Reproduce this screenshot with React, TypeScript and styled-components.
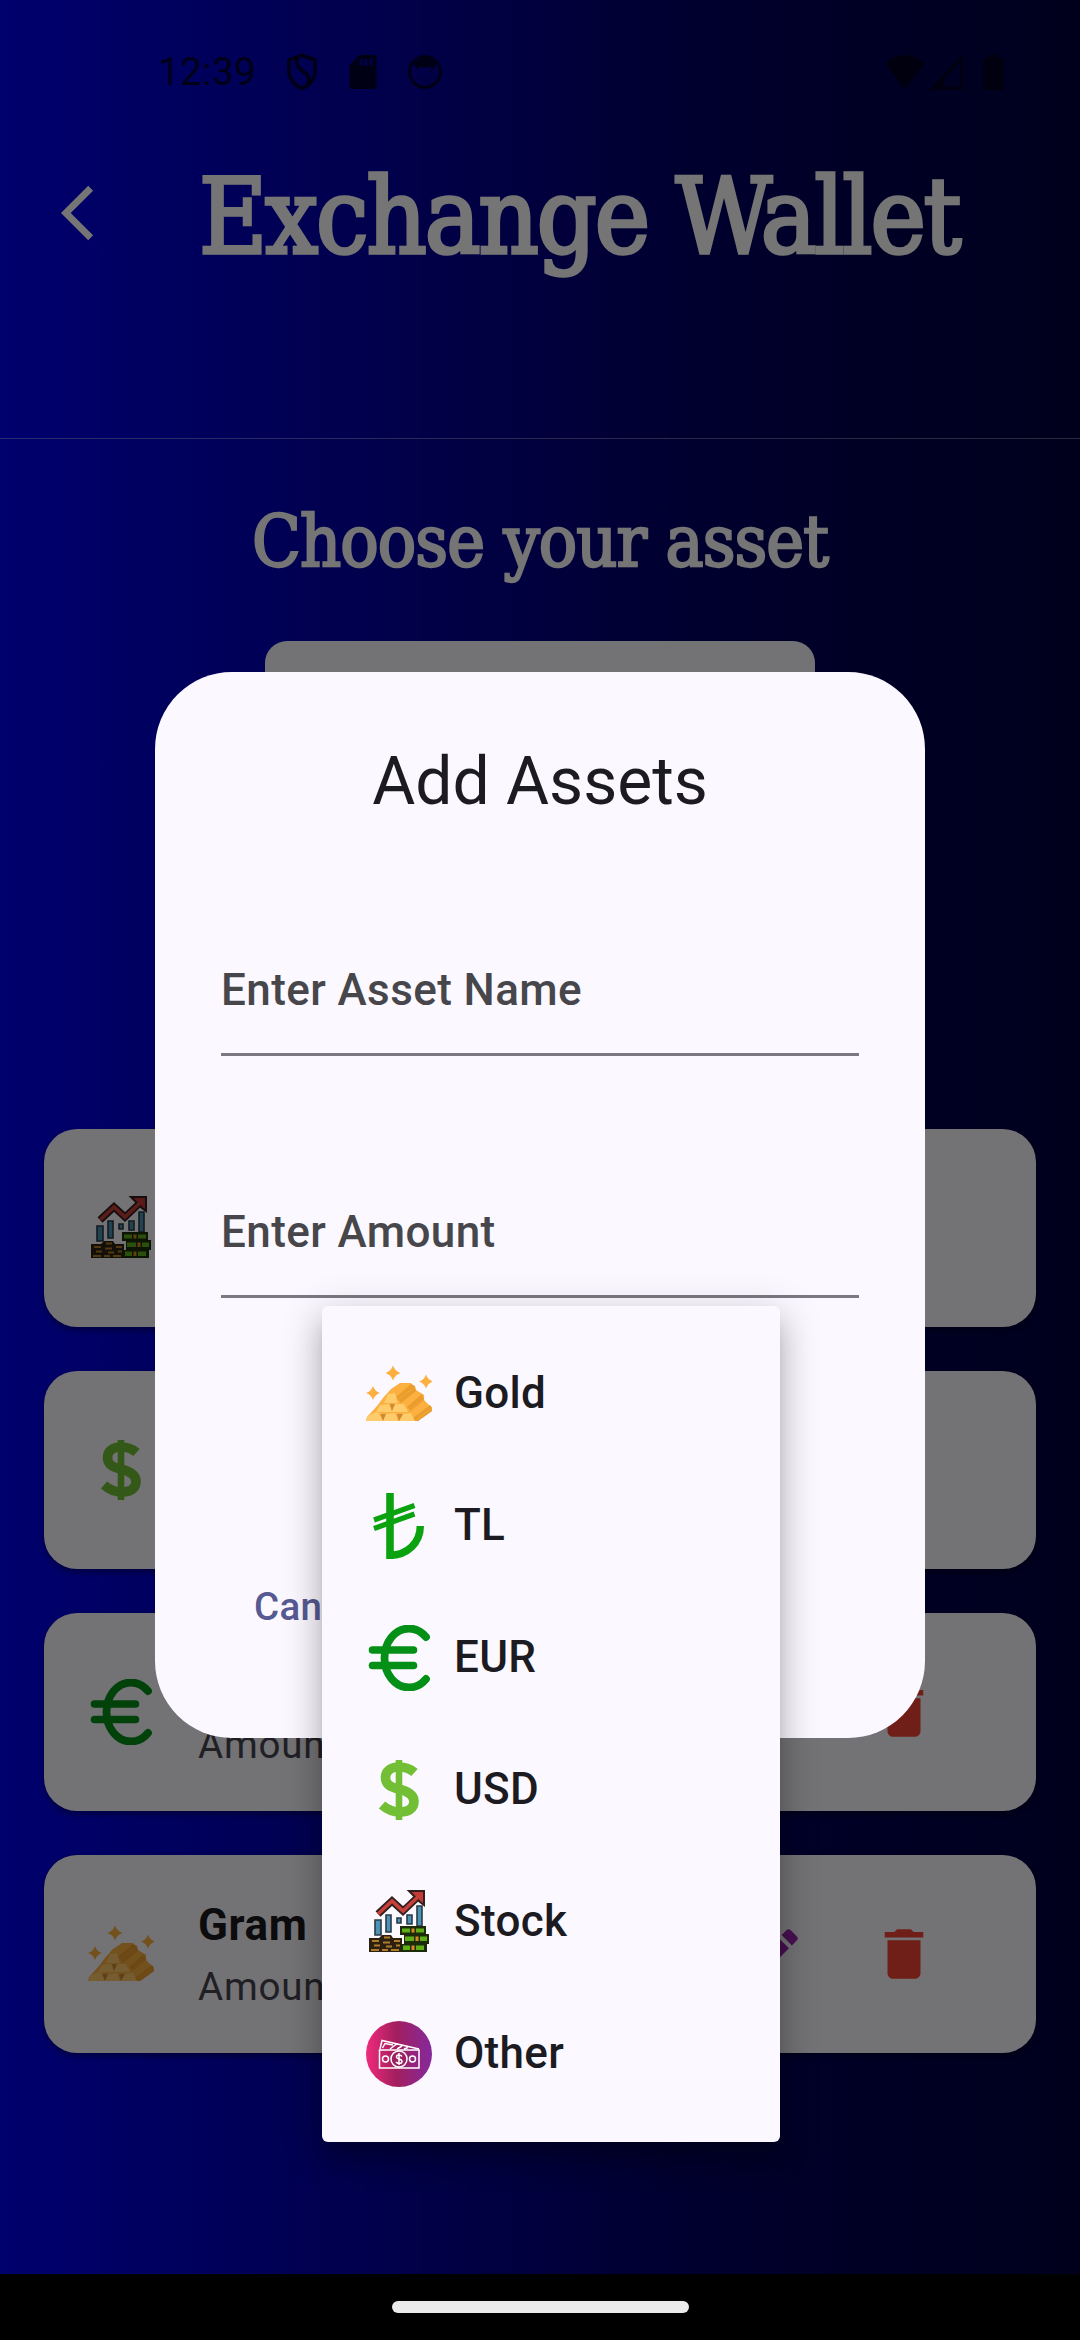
import React from "react";
import styled, { createGlobalStyle } from "styled-components";

const Global = createGlobalStyle`
  html, body { margin: 0; padding: 0; background: #000; }
  *, *::before, *::after { box-sizing: border-box; }
`;

const Phone = styled.div`
  position: relative;
  width: 1080px;
  height: 2340px;
  overflow: hidden;
  display: flex;
  flex-direction: column;
  font-family: Roboto, "Liberation Sans", sans-serif;
  color: #1b1b21;
  background: linear-gradient(90deg, #0000f0 0%, #0200c0 22%, #040090 45%, #02006a 62%, #000052 80%, #000040 100%);
`;

const StatusBar = styled.div`
  display: flex;
  align-items: center;
  justify-content: space-between;
  height: 144px;
  padding: 0 76px 0 158px;
  color: rgba(0, 0, 26, 0.86);
`;

const StatusGroup = styled.div<{ $gap: number }>`
  display: flex;
  align-items: center;
  gap: ${(p) => p.$gap}px;
`;

const Clock = styled.span`
  width: 97px;
  font-size: 39px;
  line-height: 46px;
  letter-spacing: 0.2px;
`;

const AppBar = styled.header`
  display: flex;
  align-items: flex-start;
  height: 295px;
  border-bottom: 1px solid rgba(255, 255, 255, 0.36);
`;

const BackButton = styled.div`
  width: 66px;
  height: 66px;
  margin: 36px 0 0 61px;
`;

const Serif = `"DejaVu Serif Condensed", "DejaVu Serif", serif`;

const Title = styled.h1`
  flex: 1;
  margin: 3px 0 0 72px;
  font-family: ${Serif};
  font-stretch: condensed;
  font-weight: 400;
  font-size: 104px;
  line-height: 140px;
  letter-spacing: -2px;
  white-space: nowrap;
  color: #fff;
  -webkit-text-stroke: 3.4px #fff;
`;

const Body = styled.main`
  flex: 1;
  display: flex;
  flex-direction: column;
  align-items: center;
`;

const Subtitle = styled.h2`
  margin: 53px 0 0;
  font-family: ${Serif};
  font-stretch: condensed;
  font-weight: 400;
  font-size: 71px;
  line-height: 100px;
  letter-spacing: -0.9px;
  white-space: nowrap;
  color: #fff;
  -webkit-text-stroke: 2.3px #fff;
`;

const Picker = styled.div`
  width: 550px;
  height: 200px;
  margin-top: 49px;
  border-radius: 22px;
  background: #fbf8ff;
`;

const CardList = styled.div`
  display: flex;
  flex-direction: column;
  gap: 44px;
  width: 100%;
  margin-top: 288px;
  padding: 0 44px;
`;

const Card = styled.div`
  display: flex;
  align-items: center;
  height: 198px;
  padding: 0 99px 0 44px;
  border-radius: 33px;
  background: #fbf8ff;
  box-shadow: 0 3px 6px rgba(0, 0, 0, 0.4);
`;

const CardText = styled.div`
  flex: 1;
  display: flex;
  flex-direction: column;
  gap: 4px;
  padding-left: 44px;
`;

const CardName = styled.div`
  height: 60px;
  font-size: 44px;
  line-height: 60px;
  font-weight: 700;
  letter-spacing: 0.6px;
`;

const CardAmount = styled.div`
  font-size: 38.5px;
  line-height: 55px;
  letter-spacing: 0.8px;
  color: #46464f;
`;

const CardActions = styled.div`
  display: flex;
  gap: 65px;
`;

const NavBar = styled.div`
  position: relative;
  z-index: 1;
  display: flex;
  justify-content: center;
  align-items: flex-start;
  height: 66px;
  padding-top: 27px;
  background: #000;
`;

const NavHandle = styled.div`
  width: 297px;
  height: 12px;
  border-radius: 6px;
  background: #ebebeb;
`;

const Scrim = styled.div`
  position: absolute;
  inset: 0;
  display: flex;
  justify-content: center;
  align-items: flex-start;
  padding-top: 671.5px;
  background: rgba(0, 0, 0, 0.54);
`;

const Dialog = styled.section`
  display: flex;
  flex-direction: column;
  width: 770px;
  height: 1066.5px;
  padding: 66px;
  border-radius: 77px;
  background: #fbf8ff;
`;

const DialogTitle = styled.h3`
  margin: 0;
  font-size: 66px;
  line-height: 88px;
  font-weight: 400;
  text-align: center;
`;

const Fields = styled.div`
  display: flex;
  flex-direction: column;
  margin-top: 76px;
  gap: 88px;
`;

const Field = styled.div`
  height: 154px;
  padding-top: 58px;
  border-bottom: 3px solid #7b7881;
  font-size: 44px;
  line-height: 60px;
  font-weight: 500;
  letter-spacing: 0.41px;
  color: #46464b;
`;

const DialogActions = styled.div`
  display: flex;
  justify-content: space-between;
  margin-top: auto;
  padding: 0 33px 38.5px;
`;

const TextButton = styled.span`
  font-size: 38.5px;
  line-height: 55px;
  font-weight: 500;
  letter-spacing: 0.3px;
  color: #575992;
`;

const Menu = styled.div`
  position: absolute;
  left: 322px;
  top: 1306px;
  display: flex;
  flex-direction: column;
  width: 458px;
  height: 836px;
  padding: 22px 0;
  border-radius: 6px;
  background: #fbf8ff;
  box-shadow: 0 14px 14px -8px rgba(0, 0, 0, 0.2), 0 22px 28px 3px rgba(0, 0, 0, 0.14), 0 8px 39px 6px rgba(0, 0, 0, 0.14);
`;

const MenuItem = styled.div`
  display: flex;
  align-items: center;
  gap: 22px;
  height: 132px;
  padding: 0 44px;
  font-size: 44px;
  font-weight: 500;
  letter-spacing: 0.3px;
`;

const MenuLabel = styled.span`
  line-height: 60px;
  padding-bottom: 2px;
`;

const Glyph = styled.svg`
  display: block;
  flex: none;
`;

const Icon66 = ({ children }: { children: React.ReactNode }) => (
  <Glyph width="66" height="66" viewBox="0 0 66 66" fill="none">
    {children}
  </Glyph>
);

const sparkle = (x: number, y: number, r: number) =>
  `M${x} ${y - r}Q${x + r * 0.25} ${y - r * 0.25} ${x + r} ${y}Q${x + r * 0.25} ${y + r * 0.25} ${x} ${y + r}Q${x - r * 0.25} ${y + r * 0.25} ${x - r} ${y}Q${x - r * 0.25} ${y - r * 0.25} ${x} ${y - r}Z`;

const GoldIcon = () => (
  <Icon66>
    <path d="M34 22h11l5 7 8 5v5l8 8v3L52 60H0l1-4 10-11 6-8 8-9z" fill="#fbb040" />
    <path d="M30 36l15-13 4 2 1 5-15 12zM41 46l15-13 2 6-13 11zM47 57l17-13 2 3v3L52 60h-4z" fill="#ea9d2d" />
    <path d="M30 40l16-12M43 50l15-12M50 59l16-12" stroke="#f0a435" strokeWidth="1.5" />
    <path d="M18 42l4-9 7-1 3 10zM10 51l4-7 9-1 3 8zM26 51l2-8h10l4 8zM0 60l2-5 8-4 6 2 1 7zM17 60l2-7 10-1 3 8zM33 60l3-7 9-1 4 8z" fill="#ffcb6b" />
    <path d="M14 53h6l-3 7zM31 53h6l-4 7zM24 43h5l-3 7z" fill="#cf8a34" />
    <path d={sparkle(27, 12, 7.5)} fill="#fbb040" />
    <path d={sparkle(60, 20.5, 7)} fill="#fbb040" />
    <path d={sparkle(7, 32, 7)} fill="#fbb040" />
  </Icon66>
);

const LiraIcon = () => (
  <Icon66>
    <path d="M24 0V66" stroke="#0aa30f" strokeWidth="7.6" />
    <path d="M24 62.3C41 62.3 54.3 50 54.3 33" stroke="#0aa30f" strokeWidth="7.4" />
    <path d="M8 27L48.5 12.5M8 35.5L48.5 21" stroke="#0aa30f" strokeWidth="5.2" />
  </Icon66>
);

const EuroIcon = () => (
  <Icon66>
    <path d="M60 12C55.500 6.500 50 3.500 43 3.500C29 3.500 18.500 17 18.500 33S29 62.500 43 62.500C50 62.500 55.500 59.500 60 54" stroke="#049016" strokeWidth="7.800" strokeLinecap="round" />
    <path d="M6.500 25H47.500M6.500 40.500H47.500" stroke="#049016" strokeWidth="7.600" strokeLinecap="round" />
  </Icon66>
);

const DollarIcon = () => (
  <Icon66>
    <path d="M33 3V63" stroke="#72bf35" strokeWidth="6.6" />
    <path d="M48.500 15.500C44 11.500 39 10 33 10C24.500 10 19.500 14.500 19.500 20.500C19.500 28 25 30 33 32.200C42 34.500 48 37.500 48 44.500C48 52 42 55 34 55C26 55 20.500 52 16 48" stroke="#72bf35" strokeWidth="9.600" />
  </Icon66>
);

const StockIcon = () => (
  <Icon66>
    <g fill="#4a92b8" stroke="#2b3a42" strokeWidth="1.600">
      <path d="M9 31h6v15H9zM20 26h5v17h-5zM31 29h4v5h-4zM41 26h5v9h-5zM51 17h5v20h-5z" />
    </g>
    <path d="M12 25L26 12L37 22L54 6" stroke="#302020" strokeWidth="7.200" strokeLinejoin="miter" />
    <path d="M43 2h15v14l-4-3-7-7z" fill="#c23a33" stroke="#302020" strokeWidth="2" />
    <path d="M12 25L26 12L37 22L54 6" stroke="#c8403a" strokeWidth="3.600" />
    <path d="M3 49h10l3-3h9l2 3h9v14H3z" fill="#2c2110" />
    <path d="M18 48.500h6M6 52h7M17 53.500h7M28 52h6M8 56.500h6M20 57.500h6M30 56.500h4M5 61h8M16 61h6M25 61h8" stroke="#b07c2c" strokeWidth="2.200" />
    <path d="M34 37h26v8h3v10h-2v8H35v-8h3v-9h-4z" fill="#1c2c0a" />
    <path d="M36 39.500h8v4h-8zM50 39.500h8v4h-8zM39 47.500h9v4.500h-9zM54 47.500h7v4.500h-7zM37 56.500h7v4.500h-7zM50 56.500h8v4.500h-8z" fill="#5fae18" />
    <path d="M45.500 39.500h3v4h-3zM49.500 47.500h3v4.500h-3zM45.500 56.500h3v4.500h-3z" fill="#d98a1e" />
  </Icon66>
);

const OtherIcon = () => (
  <Icon66>
    <defs>
      <linearGradient id="other" x1="0" x2="1" y1="0" y2="0">
        <stop offset="0" stopColor="#f02a7c" />
        <stop offset="0.45" stopColor="#a31f5e" />
        <stop offset="1" stopColor="#84299c" />
      </linearGradient>
    </defs>
    <circle cx="33" cy="33" r="33" fill="url(#other)" />
    <g stroke="#fff" strokeWidth="1.500">
      <path d="M13.500 29H53V47H13.500z" />
      <path d="M14 28L16 19.500L53 28M16.500 27L19 22.500L27 24M24 28L30 23.500M31 28L36 25M38 28L42 26.500" />
      <circle cx="33" cy="38" r="8" fill="#9c2164" />
      <circle cx="19.500" cy="38" r="3" />
      <circle cx="46.500" cy="38" r="3" />
      <path d="M36 35.500C34.500 33.500 30.500 33.500 30.500 36C30.500 38.500 36 37.500 36 40.500C36 43 31.500 43 30 41M33 32V44" />
    </g>
  </Icon66>
);

const MaterialIcon = ({ d, color }: { d: string; color: string }) => (
  <Glyph width="66" height="66" viewBox="0 0 24 24" fill={color}>
    <path d={d} />
  </Glyph>
);

const BACK = "M11.67 3.87L9.9 2.1 0 12l9.9 9.9 1.77-1.77L3.54 12z";
const TRASH = "M6 19c0 1.100.9 2 2 2h8c1.100 0 2-.9 2-2V7H6v12zM19 4h-3.500l-1-1h-5l-1 1H5v2h14V4z";
const EDIT =
  "M3 17.250V21h3.750L17.810 9.940l-3.750-3.750L3 17.250zM20.710 7.040c.390-.390.390-1.020 0-1.410l-2.340-2.340c-.390-.390-1.020-.390-1.410 0l-1.830 1.830 3.750 3.750 1.830-1.830z";

const assets = [
  { id: "stock", icon: <StockIcon /> },
  { id: "usd", icon: <DollarIcon /> },
  { id: "eur", icon: <EuroIcon />, amount: "Amount" },
  { id: "gold", icon: <GoldIcon />, name: "Gram", amount: "Amount" },
];

const options = [
  { icon: <GoldIcon />, label: "Gold" },
  { icon: <LiraIcon />, label: "TL" },
  { icon: <EuroIcon />, label: "EUR" },
  { icon: <DollarIcon />, label: "USD" },
  { icon: <StockIcon />, label: "Stock" },
  { icon: <OtherIcon />, label: "Other" },
];

export default function App() {
  return (
    <>
      <Global />
      <Phone>
        <StatusBar>
          <StatusGroup $gap={31}>
            <Clock>12:39</Clock>
            <Glyph width="32" height="38" viewBox="0 0 32 38" fill="none" stroke="currentColor" strokeWidth="3.600">
              <path d="M16 2.200L29 7V18C29 26 23.500 32.500 16 35.500C8.500 32.500 3 26 3 18V7Z" strokeLinejoin="round" />
              <path d="M12.500 4C9 9 11 14 16 17.500C23 22 24.500 26 22 31" />
            </Glyph>
            <Glyph width="28" height="36" viewBox="0 0 28 36" fill="currentColor">
              <path fillRule="evenodd" d="M10 1H25Q27.500 1 27.500 3.500V32.500Q27.500 35 25 35H3Q.5 35 .5 32.500V11.500ZM10.500 5v6.500h3V5zM15.500 5v6.500h3V5zM20.500 5v6.500h3V5z" />
            </Glyph>
            <Glyph width="34" height="36" viewBox="0 0 34 36" fill="none">
              <circle cx="17" cy="18" r="15.400" stroke="currentColor" strokeWidth="3" />
              <path d="M6 10C11 2 23 2 28 10L27 12.500L25 16L22.500 12.500Q17 14.500 12 12.500L9 16L7.500 12.500Z" fill="currentColor" />
              <path d="M10 23h1.500M20 24h1.500M22 17h1.500M16 28h1M7 18h1" stroke="currentColor" strokeWidth="1.500" />
            </Glyph>
          </StatusGroup>
          <StatusGroup $gap={4}>
            <Glyph width="40" height="36" viewBox="0 0 40 36" fill="currentColor">
              <path d="M20 35L0 9.500C11 -2 29 -2 40 9.500Z" />
            </Glyph>
            <Glyph width="34" height="36" viewBox="0 0 34 36" fill="currentColor">
              <path fillRule="evenodd" d="M34 0V36H0ZM31 8L15 25V32.500H31Z" />
            </Glyph>
            <Glyph width="37" height="37" viewBox="-16 0 37 37" fill="currentColor">
              <path d="M6 0.500H15V4H18.500Q21 4 21 6.500V34Q21 36.500 18.500 36.500H2.500Q0 36.500 0 34V6.500Q0 4 2.500 4H6Z" />
            </Glyph>
          </StatusGroup>
        </StatusBar>
        <AppBar>
          <BackButton>
            <MaterialIcon d={BACK} color="#fff" />
          </BackButton>
          <Title>Exchange Wallet</Title>
        </AppBar>
        <Body>
          <Subtitle>Choose your asset</Subtitle>
          <Picker />
          <CardList>
            {assets.map((a) => (
              <Card key={a.id}>
                {a.icon}
                <CardText>
                  <CardName>{a.name}</CardName>
                  <CardAmount>{a.amount}</CardAmount>
                </CardText>
                <CardActions>
                  <MaterialIcon d={EDIT} color="#9c27b0" />
                  <MaterialIcon d={TRASH} color="#f44336" />
                </CardActions>
              </Card>
            ))}
          </CardList>
        </Body>
        <NavBar>
          <NavHandle />
        </NavBar>
        <Scrim>
          <Dialog>
            <DialogTitle>Add Assets</DialogTitle>
            <Fields>
              <Field>Enter Asset Name</Field>
              <Field>Enter Amount</Field>
            </Fields>
            <DialogActions>
              <TextButton>Cancel</TextButton>
            </DialogActions>
          </Dialog>
        </Scrim>
        <Menu>
          {options.map((o) => (
            <MenuItem key={o.label}>
              {o.icon}
              <MenuLabel>{o.label}</MenuLabel>
            </MenuItem>
          ))}
        </Menu>
      </Phone>
    </>
  );
}
